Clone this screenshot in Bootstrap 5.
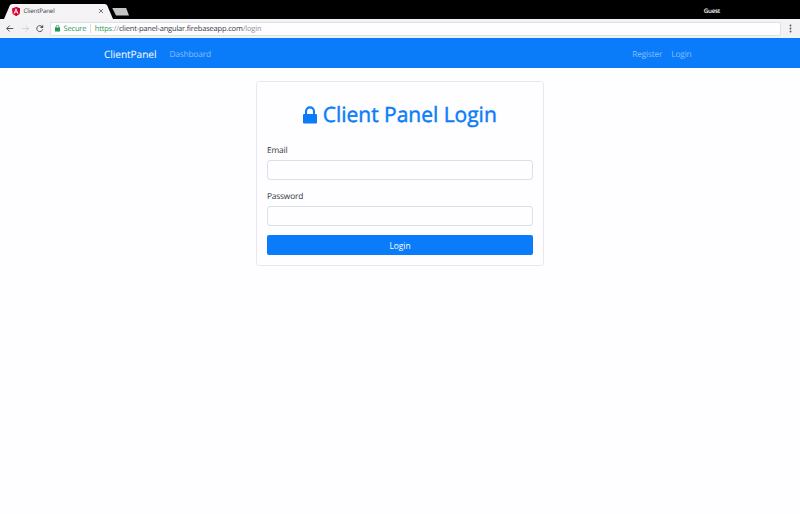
<!DOCTYPE html>
<html lang="en">
<head>
<meta charset="utf-8">
<meta name="viewport" content="width=device-width, initial-scale=1">
<title>ClientPanel</title>
<link href="https://cdn.jsdelivr.net/npm/bootstrap@5.3.0/dist/css/bootstrap.min.css" rel="stylesheet">
<style>
  body { font-family: "Open Sans", "Noto Sans", sans-serif; font-size: 8.4px; letter-spacing: -.2px; line-height: 12px; color: #343a40; background: #fefdff; height: 514px; overflow: hidden; text-rendering: geometricPrecision; }
  svg { display: block; flex: none; }
  .tab-strip { height: 19px; background: #000; }
  .browser-tab { width: 109px; height: 15px; margin-left: 4px; padding: 0 10px 1px 8px; background: #f5f3f6; clip-path: polygon(0 100%, 6px 1px, 8px 0, 101px 0, 103px 1px, 109px 100%); font-size: 6.2px; letter-spacing: -.12px; }
  .tab-text { padding-left: 3.5px; }
  .new-tab { width: 17px; height: 8px; margin: 0 0 3.5px -1px; background: #c6c4c3; clip-path: polygon(0 0, 14px 0, 17px 100%, 4px 100%); }
  .guest { margin-right: 80px; font-size: 6.2px; font-weight: 600; letter-spacing: -.25px; color: #fff; line-height: 17px; }
  .toolbar { height: 19px; padding: 0 6px 0 5px; background: #f2f1f4; }
  .address { height: 14px; padding: 0 4px; margin: 0 5px 0 5px; background: #fefdff; border: 1px solid #e0dfe2; border-radius: 2px; font-size: 7.5px; letter-spacing: -.18px; }
  .secure { color: #2f9a50; }
  .secure-label { padding-left: 3.5px; letter-spacing: -.18px; }
  .divider { width: 1px; height: 9px; background: #dcdbde; margin: 0 3.5px 0 4px; }
  .path-part { color: #929196; }
  .site-nav { --bs-navbar-padding-y: 0; height: 30px; background: #0a7cf9; }
  .site-nav .container { width: 592px; max-width: none; padding: 0; margin-left: 104px; margin-right: 104px; }
  .site-nav .navbar-brand { font-size: 10.2px; letter-spacing: -.1px; line-height: 16px; padding: 1px 0 0; margin-right: 13px; color: #fff; }
  .site-nav .nav-link { font-size: 8.4px; line-height: 14px; padding: 3px 0 0; color: #86bdfc; }
  .account-links { margin-right: 4.5px; gap: 9px; }
  .login-card { width: 288px; margin: 13px auto 0; height: 185px; border: 1px solid #e9e8ee; border-radius: 3px; background: #fefdff; padding: 0 10px; color: inherit; }
  .login-title { font-size: 21px; letter-spacing: -.02px; line-height: 26px; font-weight: 400; -webkit-text-stroke: .45px #0a7cf9; color: #0a7cf9; margin: 20px 0 16px; }
  .title-icon { margin: 0 5.5px 1px 0; }
  .login-card .form-label { margin: 0 0 4px; padding-top: 1px; height: 12px; line-height: 12px; }
  .login-card .form-control { height: 20px; min-height: 0; border: 1px solid #dbe1ea; border-radius: 3px; background: #fefdff; padding: 4px; font-size: 8px; margin-bottom: 10px; }
  .login-card .form-control.last-field { margin-bottom: 9px; }
  .login-card .btn { height: 20px; padding: 0; background: #0a7cf9; border: 0; border-radius: 2px; font-size: 8.4px; line-height: 21px; }
</style>
<script src="https://cdn.jsdelivr.net/npm/bootstrap@5.3.0/dist/js/bootstrap.bundle.min.js"></script>
</head>
<body>
<header>
  <div class="tab-strip d-flex align-items-end">
    <div class="browser-tab d-flex align-items-center">
      <svg width="8" height="9" viewBox="0 0 16 18"><path fill="#dd0031" d="M8 0 16 3 14.8 13.8 8 18 1.2 13.8 0 3z"/><path fill="#c3002f" d="M8 0 16 3 14.8 13.8 8 18z"/><path fill="#fff" fill-rule="evenodd" d="M8 2 3 13.3h2l1-2.5h4l1 2.5h2zM6.7 9 8 5.8 9.3 9z"/></svg>
      <span class="tab-text">ClientPanel</span>
      <svg class="ms-auto" width="4" height="4" viewBox="0 0 4 4"><path d="m0 0 4 4m0-4-4 4" stroke="#555" stroke-width=".8"/></svg>
    </div>
    <div class="new-tab"></div>
    <span class="guest ms-auto">Guest</span>
  </div>
  <div class="toolbar d-flex align-items-center">
    <svg width="40" height="10" viewBox="0 0 40 10" fill="none" stroke="#55545a"><path d="M8.3 4.5H1.7m3-3-3 3 3 3"/><path stroke="#d2d1d5" d="M17 4.5h6.6m-3-3 3 3-3 3"/><path d="M37 2.6A3 3 0 1 0 37.7 5.3"/><path fill="#55545a" stroke="none" d="M38.2.8v3.3h-3.3z"/></svg>
    <div class="address flex-grow-1 d-flex align-items-center">
      <svg width="5" height="7" viewBox="0 0 10 14"><path fill="#239848" d="M0 5h10v8H0z"/><path fill="none" stroke="#239848" stroke-width="1.6" d="M2.2 6V3.5a2.8 2.8 0 0 1 5.6 0V6"/></svg>
      <span class="secure secure-label">Secure</span><span class="divider"></span>
      <span class="url"><span class="secure">https</span><span class="path-part">://</span>client-panel-angular.firebaseapp.com<span class="path-part">/login</span></span>
    </div>
    <svg width="8" height="10" viewBox="0 0 8 10" fill="#55545a"><circle cx="4.5" cy="1.5" r=".9"/><circle cx="4.5" cy="4.5" r=".9"/><circle cx="4.5" cy="7.5" r=".9"/></svg>
  </div>
</header>
<nav class="navbar navbar-expand site-nav">
  <div class="container">
    <a class="navbar-brand" href="#">ClientPanel</a>
    <ul class="navbar-nav me-auto"><li class="nav-item"><a class="nav-link px-0" href="#">Dashboard</a></li></ul>
    <ul class="navbar-nav account-links"><li class="nav-item"><a class="nav-link px-0" href="#">Register</a></li><li class="nav-item"><a class="nav-link px-0" href="#">Login</a></li></ul>
  </div>
</nav>
<main>
  <div class="card login-card">
    <h1 class="login-title d-flex justify-content-center align-items-center">
      <svg width="14" height="18" viewBox="0 0 14 18" class="title-icon"><rect y="8" width="14" height="9.5" rx="1" fill="#0a7cf9"/><path fill="none" stroke="#0a7cf9" stroke-width="2.1" d="M3 9V5.4a4 4 0 0 1 8 0V9"/></svg>
      <span>Client Panel Login</span>
    </h1>
    <form>
      <label class="form-label d-block" for="email">Email</label>
      <input class="form-control" type="email" id="email">
      <label class="form-label d-block" for="password">Password</label>
      <input class="form-control last-field" type="password" id="password">
      <button class="btn btn-primary w-100 d-block" type="button">Login</button>
    </form>
  </div>
</main>
</body>
</html>
